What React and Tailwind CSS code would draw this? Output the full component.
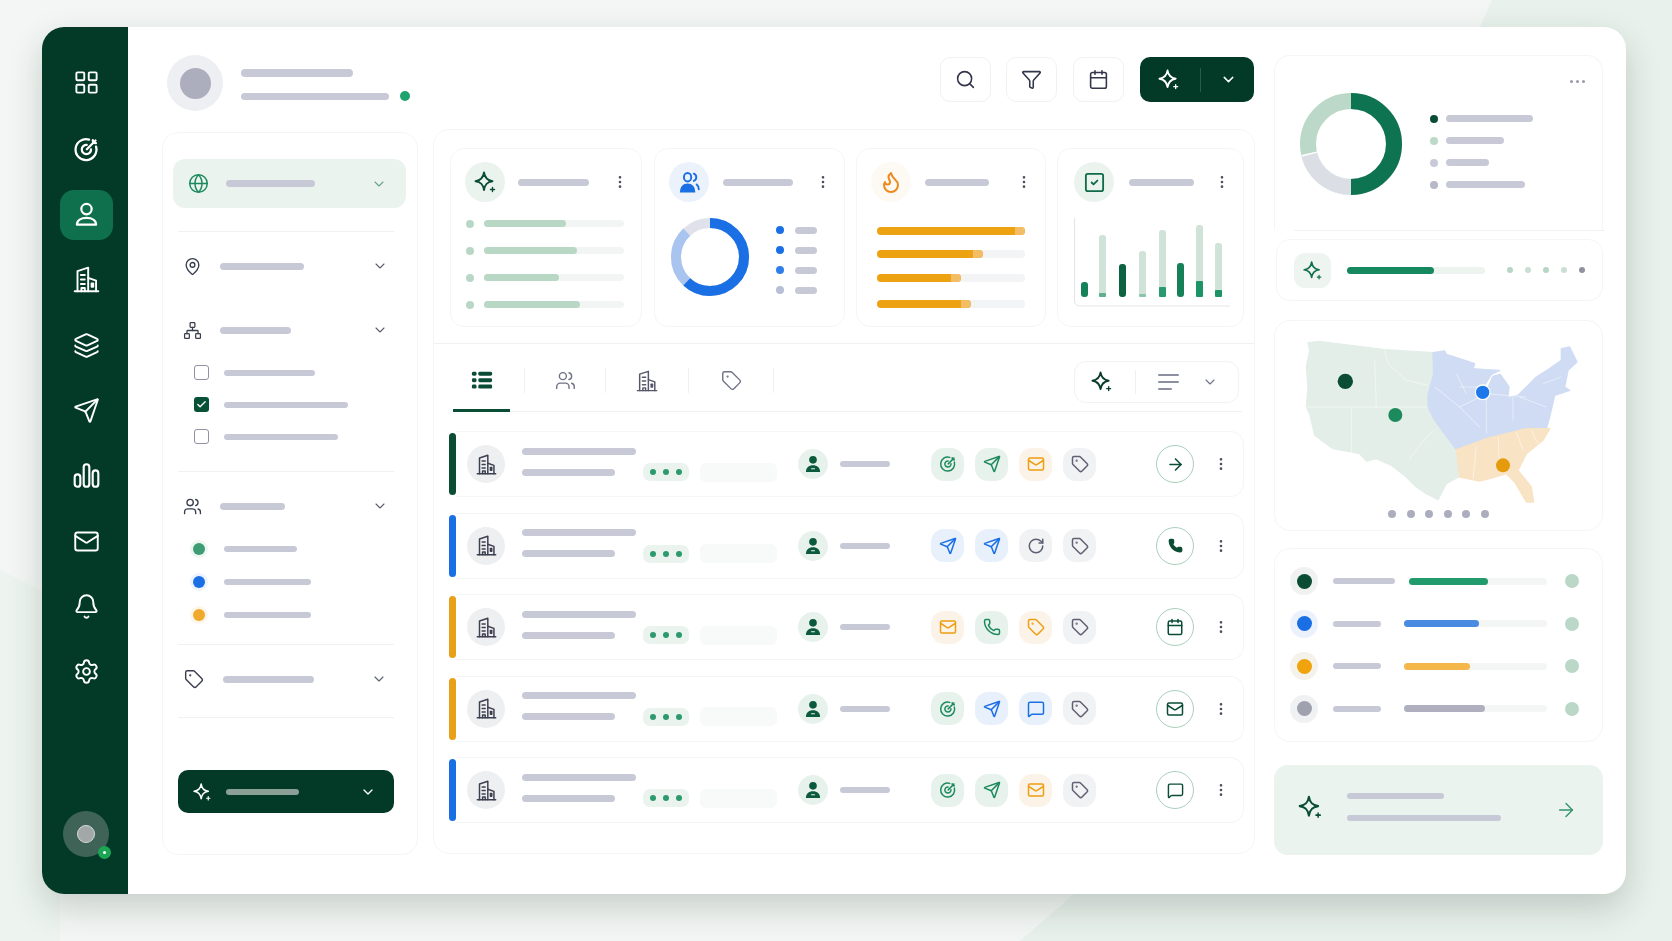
import React from 'react';
import {
  LayoutGrid, Layers, Send, Mail, Bell, Settings, Globe, MapPin, Network, Users, Tag,
  ChevronDown, Search, Funnel, Calendar, Flame, SquareCheck, Phone, ArrowRight, MessageSquare,
  EllipsisVertical, RotateCw, Check,
} from 'lucide-react';

const Bar = ({ className = '' }) => <div className={`rounded-full bg-[#c8c9d7] ${className}`} />;

const Sparkle = ({ className = '', strokeWidth = 1.9 }) => (
  <svg viewBox="0 0 24 24" fill="none" stroke="currentColor" strokeWidth={strokeWidth} strokeLinejoin="round" strokeLinecap="round" className={className}>
    <path d="M11 2.5C11.8 8 14 10.4 19.5 11.2 14 12 11.8 14.4 11 20 10.2 14.4 8 12 2.5 11.2 8 10.4 10.2 8 11 2.5Z" />
    <path d="M19.5 17.5v4M17.5 19.5h4" strokeWidth={1.4} />
  </svg>
);

const TargetIcon = ({ className = '' }) => (
  <svg viewBox="0 0 24 24" fill="none" stroke="currentColor" strokeWidth={2} strokeLinecap="round" className={className}>
    <path d="M20.5 9.5a9.3 9.3 0 1 1-6.2-6.3" />
    <path d="M16 11.8a4.1 4.1 0 1 1-3.8-3.9" />
    <path d="M12.3 11.8 20 4M17.6 3.6l.3 2.5 2.5.3" />
  </svg>
);

const UserIcon = ({ className = '' }) => (
  <svg viewBox="0 0 24 24" fill="none" stroke="currentColor" strokeWidth={2} strokeLinejoin="round" className={className}>
    <circle cx="12" cy="7.2" r="4.6" />
    <path d="M3.5 21c0-3.8 3.6-6 8.5-6s8.5 2.2 8.5 6z" />
  </svg>
);

const BuildingIcon = ({ className = '', strokeWidth = 1.8 }) => (
  <svg viewBox="0 0 24 24" fill="none" stroke="currentColor" strokeWidth={strokeWidth} strokeLinejoin="round" strokeLinecap="round" className={className}>
    <path d="M1.5 22.5h21" />
    <path d="M4 22.5V4.5L13.5 1.5V22.5" />
    <path d="M13.5 10.5 20.5 13V22.5" />
    <path d="M7 8h3.5M7 12h3.5M7 16h3.5" />
    <path d="M7.5 22.5V19.5h3v3" />
    <path d="M16.5 15.5h1.5V18.5h-1.5z" />
  </svg>
);

const ChartIcon = ({ className = '' }) => (
  <svg viewBox="0 0 24 24" fill="none" stroke="currentColor" strokeWidth={1.9} className={className}>
    <rect x="1.5" y="11" width="5" height="11" rx="2.5" />
    <rect x="9.5" y="2" width="5" height="20" rx="2.5" />
    <rect x="17.5" y="7.5" width="5" height="14.5" rx="2.5" />
  </svg>
);

const PeopleFill = ({ className = '' }) => (
  <svg viewBox="0 0 24 24" fill="none" stroke="currentColor" strokeWidth={2} strokeLinecap="round" className={className}>
    <ellipse cx="10" cy="6.5" rx="3.8" ry="4.4" />
    <path d="M3 21.5c0-4.5 2.8-7.5 7-7.5s7 3 7 7.5z" fill="currentColor" />
    <path d="M16.5 2.8c1.8.8 2.6 2.2 2.6 3.8s-.8 3-2.6 3.8M19.5 14c1.6 1.2 2.2 3 2.2 5" />
  </svg>
);

const PersonFill = () => (
  <svg viewBox="0 0 24 24" className="w-[20px] h-[20px] text-[#0c5a3c]" fill="currentColor">
    <circle cx="12" cy="7" r="4.6" />
    <path d="M3.5 21.5c0-5 3.5-8 8.5-8s8.5 3 8.5 8z" />
    <rect x="9.5" y="17" width="5" height="1.4" rx=".7" fill="#e8f2ec" />
  </svg>
);

const ListIcon = () => (
  <svg viewBox="0 0 24 24" className="w-[22px] h-[22px] text-[#0a4d34]" fill="currentColor">
    <rect x="1" y="3" width="5" height="4.4" rx="1.6" />
    <rect x="8" y="3" width="15" height="4.4" rx="1.6" />
    <rect x="1" y="10" width="5" height="4.4" rx="1.6" />
    <rect x="8" y="10" width="15" height="4.4" rx="1.6" />
    <rect x="1" y="17" width="5" height="4.4" rx="1.6" />
    <rect x="8" y="17" width="15" height="4.4" rx="1.6" />
  </svg>
);

const Dots = () => <EllipsisVertical className="w-[16px] h-[16px] text-[#4c4f60] shrink-0" strokeWidth={2} />;

const navIcons = [LayoutGrid, TargetIcon, UserIcon, BuildingIcon, Layers, Send, ChartIcon, Mail, Bell, Settings];

const Sidebar = () => (
  <aside className="w-[86px] shrink-0 bg-[#033a27] flex flex-col items-center pl-[2px] pt-[32px] pb-[37px]">
    <div className="flex flex-col gap-[15.3px]">
      {navIcons.map((Icon, i) => (
        <div key={i} className={`w-[53px] h-[50px] rounded-[14px] flex items-center justify-center text-white ${i === 2 ? 'bg-[#0e704c]' : ''} ${i === 0 ? '-translate-y-[2px]' : ''}`}>
          <Icon className="w-[27px] h-[27px]" strokeWidth={1.7} />
        </div>
      ))}
    </div>
    <div className="mt-auto relative w-[46px] h-[46px] rounded-full bg-[#3f6457] flex items-center justify-center">
      <div className="w-[18px] h-[18px] rounded-full bg-[#a2a7a8] border border-[#d6d9d9]" />
      <div className="absolute right-[-2px] bottom-[-2px] w-[13px] h-[13px] rounded-full bg-[#1ba653] flex items-center justify-center">
        <div className="w-[3px] h-[3px] rounded-full bg-white" />
      </div>
    </div>
  </aside>
);

const Filters = () => (
  <div className="w-[256px] h-[723px] mt-[3px] shrink-0 rounded-[16px] border border-[#f4f5f6] bg-white px-[10px] pt-[26px]">
    <div className="w-[233px] h-[49px] rounded-[12px] bg-[#ebf3ee] flex items-center pl-[15px]">
      <Globe className="w-[21px] h-[21px] text-[#1b8a5d]" strokeWidth={1.7} />
      <Bar className="w-[89px] h-[7px] ml-[17px]" />
      <ChevronDown className="w-[16px] h-[16px] text-[#67a487] ml-[56px]" strokeWidth={1.7} />
    </div>
    <div className="h-px w-[216px] ml-[5px] mt-[23px] bg-[#f0f1f3]" />
    <div className="flex items-center mt-[24px] ml-[10px] h-[20px]">
      <MapPin className="w-[19px] h-[19px] text-[#3a3d4e]" strokeWidth={1.7} />
      <Bar className="w-[84px] h-[7px] ml-[18px]" />
      <ChevronDown className="w-[16px] h-[16px] text-[#5d6072] ml-[68px]" strokeWidth={1.7} />
    </div>
    <div className="flex items-center mt-[44px] ml-[10px] h-[20px]">
      <Network className="w-[19px] h-[19px] text-[#3a3d4e]" strokeWidth={1.6} />
      <Bar className="w-[71px] h-[7px] ml-[18px]" />
      <ChevronDown className="w-[16px] h-[16px] text-[#5d6072] ml-[81px]" strokeWidth={1.7} />
    </div>
    <div className="flex flex-col gap-[17px] mt-[25px] ml-[21px]">
      <div className="flex items-center h-[15px]">
        <div className="w-[15px] h-[15px] rounded-[3px] border-[1.5px] border-[#8f92a3]" />
        <Bar className="w-[91px] h-[6px] ml-[15px]" />
      </div>
      <div className="flex items-center h-[15px]">
        <div className="w-[15px] h-[15px] rounded-[3px] bg-[#075237] flex items-center justify-center">
          <Check className="w-[11px] h-[11px] text-white" strokeWidth={3} />
        </div>
        <Bar className="w-[124px] h-[6px] ml-[15px]" />
      </div>
      <div className="flex items-center h-[15px]">
        <div className="w-[15px] h-[15px] rounded-[3px] border-[1.5px] border-[#8f92a3]" />
        <Bar className="w-[114px] h-[6px] ml-[15px]" />
      </div>
    </div>
    <div className="h-px w-[216px] ml-[5px] mt-[27px] bg-[#f0f1f3]" />
    <div className="flex items-center mt-[24px] ml-[10px] h-[20px]">
      <Users className="w-[19px] h-[19px] text-[#3a3d4e]" strokeWidth={1.7} />
      <Bar className="w-[65px] h-[7px] ml-[18px]" />
      <ChevronDown className="w-[16px] h-[16px] text-[#5d6072] ml-[87px]" strokeWidth={1.7} />
    </div>
    <div className="flex flex-col gap-[21px] mt-[27px] ml-[20px]">
      <div className="flex items-center h-[12px]">
        <div className="w-[12px] h-[12px] rounded-full bg-[#3d9c74] ring-[3px] ring-[#eef6f1]" />
        <Bar className="w-[73px] h-[6px] ml-[19px]" />
      </div>
      <div className="flex items-center h-[12px]">
        <div className="w-[12px] h-[12px] rounded-full bg-[#1a6fe4] ring-[3px] ring-[#edf3fc]" />
        <Bar className="w-[87px] h-[6px] ml-[19px]" />
      </div>
      <div className="flex items-center h-[12px]">
        <div className="w-[12px] h-[12px] rounded-full bg-[#f0aa2b] ring-[3px] ring-[#fcf6ea]" />
        <Bar className="w-[87px] h-[6px] ml-[19px]" />
      </div>
    </div>
    <div className="h-px w-[216px] ml-[5px] mt-[23px] bg-[#f0f1f3]" />
    <div className="flex items-center mt-[24px] ml-[11px] h-[20px]">
      <Tag className="w-[20px] h-[20px] text-[#3a3d4e]" strokeWidth={1.7} />
      <Bar className="w-[91px] h-[7px] ml-[19px]" />
      <ChevronDown className="w-[16px] h-[16px] text-[#5d6072] ml-[57px]" strokeWidth={1.7} />
    </div>
    <div className="h-px w-[216px] ml-[5px] mt-[28px] bg-[#f0f1f3]" />
    <div className="w-[216px] h-[43px] ml-[5px] mt-[52px] rounded-[10px] bg-[#033a27] flex items-center pl-[14px]">
      <Sparkle className="w-[20px] h-[20px] text-white" />
      <div className="w-[73px] h-[6px] ml-[14px] rounded-full bg-[#8ba096]" />
      <ChevronDown className="w-[16px] h-[16px] text-white ml-[61px]" strokeWidth={2} />
    </div>
  </div>
);

const CardHead = ({ bg, icon, barW, pl, barMl }) => (
  <div className={`flex items-center h-[40px] pr-[13px] ${pl}`}>
    <div className={`w-[40px] h-[40px] rounded-full flex items-center justify-center shrink-0 ${bg}`}>{icon}</div>
    <Bar className={`h-[7px] ${barW} ${barMl}`} />
    <div className="ml-auto"><Dots /></div>
  </div>
);

const listRows = ['w-[82px]', 'w-[93px]', 'w-[75px]', 'w-[96px]'];

const heatRows = [
  { w: 'w-[148px]', mt: '' },
  { w: 'w-[106px]', mt: 'mt-[15px]' },
  { w: 'w-[84px]', mt: 'mt-[16px]' },
  { w: 'w-[94px]', mt: 'mt-[18px]' },
];

const barsChart = [
  { x: 7, t: 64, fill: '#15805a', solid: true },
  { x: 25, t: 17, fill: '#5faf8e', s: 75 },
  { x: 45, t: 46, fill: '#0d6241', solid: true },
  { x: 65, t: 33, fill: '#8cc4aa', s: 76 },
  { x: 85, t: 12, fill: '#2a9a70', s: 69 },
  { x: 103, t: 45, fill: '#15805a', solid: true },
  { x: 122, t: 7, fill: '#1d9468', s: 63 },
  { x: 141, t: 25, fill: '#1d9468', s: 72 },
];

const KpiCards = () => (
  <div className="flex pl-[16px] pt-[18px] pb-[16px] border-b border-[#f0f1f3]">
    <div className="w-[192px] h-[179px] rounded-[14px] border border-[#f4f5f6] pt-[13px]">
      <CardHead pl="pl-[14px]" barMl="ml-[13px]" barW="w-[71px]" bg="bg-[#ebf3ee]" icon={<Sparkle className="w-[24px] h-[24px] text-[#0a4d34]" />} />
      <div className="flex flex-col gap-[20px] mt-[18px] pl-[15px]">
        {listRows.map((w) => (
          <div key={w} className="flex items-center h-[7px]">
            <div className="w-[8px] h-[8px] rounded-full bg-[#b9d7c6]" />
            <div className="w-[140px] h-[7px] ml-[10px] rounded-full bg-[#f3f5f4]">
              <div className={`h-[7px] rounded-full bg-[#b8d7c4] ${w}`} />
            </div>
          </div>
        ))}
      </div>
    </div>
    <div className="w-[191px] h-[179px] ml-[12px] rounded-[14px] border border-[#f4f5f6] pt-[13px]">
      <CardHead pl="pl-[14px]" barMl="ml-[14px]" barW="w-[70px]" bg="bg-[#ecf2fc]" icon={<PeopleFill className="w-[23px] h-[23px] text-[#1a6fe4]" />} />
      <div className="flex items-center mt-[16px] pl-[16px]">
        <svg viewBox="0 0 78 78" className="w-[78px] h-[78px] -rotate-90">
          <circle cx="39" cy="39" r="34" fill="none" stroke="#dfe2ea" strokeWidth="10" />
          <circle cx="39" cy="39" r="34" fill="none" stroke="#a9c5ef" strokeWidth="10" pathLength="100" strokeDasharray="88 100" />
          <circle cx="39" cy="39" r="34" fill="none" stroke="#1a6fe4" strokeWidth="10" pathLength="100" strokeDasharray="62 100" />
        </svg>
        <div className="flex flex-col gap-[12px] ml-[27px] mt-[6px]">
          {['bg-[#1a6fe4]', 'bg-[#1a6fe4]', 'bg-[#2f7fe8]', 'bg-[#b7bfd6]'].map((c, i) => (
            <div key={i} className="flex items-center h-[8px]">
              <div className={`w-[8px] h-[8px] rounded-full ${c}`} />
              <Bar className="w-[22px] h-[7px] ml-[11px]" />
            </div>
          ))}
        </div>
      </div>
    </div>
    <div className="w-[190px] h-[179px] ml-[11px] rounded-[14px] border border-[#f4f5f6] pt-[13px]">
      <CardHead pl="pl-[14px]" barMl="ml-[14px]" barW="w-[64px]" bg="bg-[#fdf9f3]" icon={<Flame className="w-[24px] h-[24px] text-[#ee8a1d]" strokeWidth={2} />} />
      <div className="mt-[25px] pl-[20px]">
        {heatRows.map((r) => (
          <div key={r.w} className={`w-[148px] h-[8px] rounded-full bg-[#f3f4f5] ${r.mt}`}>
            <div className={`h-[8px] rounded-full bg-[#eda211] flex justify-end ${r.w}`}>
              <div className="w-[10px] h-[8px] rounded-r-full bg-[#f3bd65]" />
            </div>
          </div>
        ))}
      </div>
    </div>
    <div className="w-[187px] h-[179px] ml-[11px] rounded-[14px] border border-[#f4f5f6] pt-[13px]">
      <CardHead pl="pl-[16px]" barMl="ml-[15px]" barW="w-[65px]" bg="bg-[#ebf3ee]" icon={<SquareCheck className="w-[23px] h-[23px] text-[#0f6b48]" strokeWidth={1.9} />} />
      <svg viewBox="0 0 156 89" className="w-[156px] h-[89px] mt-[16px] ml-[16px]">
        <path d="M.5 0V83a5 5 0 0 0 5 5H156" fill="none" stroke="#e3e5e8" strokeWidth="1" />
        {barsChart.map((b) => (
          <g key={b.x}>
            {!b.solid && <rect x={b.x} y={b.t} width="7" height={79 - b.t} rx="3" fill="#cfe3d8" />}
            {b.solid
              ? <rect x={b.x} y={b.t} width="7" height={79 - b.t} rx="3" fill={b.fill} />
              : <rect x={b.x} y={b.s} width="7" height={79 - b.s} rx="1" fill={b.fill} />}
          </g>
        ))}
      </svg>
    </div>
  </div>
);

const Tabs = () => (
  <div className="flex items-center h-[68px] ml-[19px] mr-[12px] border-b border-[#f0f1f3]">
    <div className="w-[57px] self-stretch pt-[6px] flex items-center justify-center border-b-[3px] border-[#0a4d34] mb-[-1px]">
      <ListIcon />
    </div>
    <div className="w-[15px] h-[25px] mt-[6px] border-r border-[#f0f1f3]" />
    <div className="w-[81px] h-[25px] mt-[6px] flex items-center justify-center border-r border-[#f0f1f3]">
      <Users className="w-[21px] h-[21px] text-[#6f7285]" strokeWidth={1.6} />
    </div>
    <div className="w-[83px] h-[25px] mt-[6px] flex items-center justify-center border-r border-[#f0f1f3]">
      <BuildingIcon className="w-[22px] h-[22px] text-[#55586a]" strokeWidth={1.6} />
    </div>
    <div className="w-[85px] h-[25px] mt-[6px] flex items-center justify-center border-r border-[#f0f1f3]">
      <Tag className="w-[21px] h-[21px] text-[#6f7285]" strokeWidth={1.6} />
    </div>
    <div className="ml-auto mr-[3px] mt-[8px] w-[165px] h-[42px] rounded-[12px] border border-[#f1f2f4] flex items-center pl-[15px]">
      <Sparkle className="w-[23px] h-[23px] text-[#0a3d2a]" />
      <div className="w-px h-[24px] bg-[#eeeff2] ml-[22px]" />
      <div className="ml-[22px] flex flex-col gap-[5px]">
        <div className="w-[21px] h-[2px] bg-[#8d90a1] rounded-full" />
        <div className="w-[21px] h-[2px] bg-[#8d90a1] rounded-full" />
        <div className="w-[14px] h-[2px] bg-[#8d90a1] rounded-full" />
      </div>
      <ChevronDown className="w-[16px] h-[16px] text-[#6f7285] ml-[23px]" strokeWidth={1.7} />
    </div>
  </div>
);

const tones = {
  green: 'bg-[#e8f2ec] text-[#1c8a5c]',
  blue: 'bg-[#e8f0fb] text-[#1a6fe4]',
  amber: 'bg-[#fbf3e8] text-[#ee9f12]',
  gray: 'bg-[#f1f2f4] text-[#5e6173]',
};

const rows = [
  { accent: 'bg-[#0a4d34]', actions: [[TargetIcon, 'green'], [Send, 'green'], [Mail, 'amber'], [Tag, 'gray']], Go: ArrowRight, goSize: 'w-[19px] h-[19px]' },
  { accent: 'bg-[#1a6fe4]', actions: [[Send, 'blue'], [Send, 'blue'], [RotateCw, 'gray'], [Tag, 'gray']], Go: Phone, goFill: true, goSize: 'w-[15px] h-[15px]' },
  { accent: 'bg-[#e8a018]', actions: [[Mail, 'amber'], [Phone, 'green'], [Tag, 'amber'], [Tag, 'gray']], Go: Calendar, goSize: 'w-[18px] h-[18px]' },
  { accent: 'bg-[#e8a018]', actions: [[TargetIcon, 'green'], [Send, 'blue'], [MessageSquare, 'blue'], [Tag, 'gray']], Go: Mail, goSize: 'w-[18px] h-[18px]' },
  { accent: 'bg-[#1a6fe4]', actions: [[TargetIcon, 'green'], [Send, 'green'], [Mail, 'amber'], [Tag, 'gray']], Go: MessageSquare, goSize: 'w-[17px] h-[17px]' },
];

const Row = ({ accent, actions, Go, goFill, goSize }) => (
  <div className="flex h-[66px]">
    <div className={`w-[7px] my-[2px] rounded-full shrink-0 ${accent}`} />
    <div className="flex-1 flex items-center rounded-r-[14px] border border-l-0 border-[#f4f5f6] pl-[11px]">
      <div className="w-[38px] h-[38px] rounded-full bg-[#eeeff1] flex items-center justify-center shrink-0">
        <BuildingIcon className="w-[21px] h-[21px] text-[#3d4050]" strokeWidth={1.7} />
      </div>
      <div className="ml-[17px] w-[114px] flex flex-col gap-[14px] shrink-0 mt-[-5px]">
        <Bar className="w-[114px] h-[7px]" />
        <Bar className="w-[93px] h-[7px]" />
      </div>
      <div className="ml-[7px] mt-[16px] w-[46px] h-[18px] rounded-[7px] bg-[#ebf3ee] flex items-center justify-center gap-[7px] shrink-0">
        <div className="w-[6px] h-[6px] rounded-full bg-[#2d9a6d]" />
        <div className="w-[6px] h-[6px] rounded-full bg-[#2d9a6d]" />
        <div className="w-[6px] h-[6px] rounded-full bg-[#2d9a6d]" />
      </div>
      <div className="ml-[11px] mt-[16px] w-[77px] h-[19px] rounded-[6px] bg-[#f8f9f9] shrink-0" />
      <div className="ml-[21px] w-[30px] h-[30px] rounded-full bg-[#e8f2ec] flex items-center justify-center shrink-0">
        <PersonFill />
      </div>
      <Bar className="w-[50px] h-[6px] ml-[12px] shrink-0" />
      <div className="ml-[41px] flex gap-[11px]">
        {actions.map(([Icon, tone], i) => (
          <div key={i} className={`w-[33px] h-[33px] rounded-[13px] flex items-center justify-center ${tones[tone]}`}>
            <Icon className="w-[18px] h-[18px]" strokeWidth={2} />
          </div>
        ))}
      </div>
      <div className="ml-[60px] w-[38px] h-[38px] rounded-full border border-[#a9d0bc] flex items-center justify-center shrink-0">
        <Go className={`text-[#0a4d34] ${goSize}`} strokeWidth={2} fill={goFill ? 'currentColor' : 'none'} />
      </div>
      <div className="ml-[19px]"><Dots /></div>
    </div>
  </div>
);

const Middle = () => (
  <div className="w-[822px] h-[725px] ml-[15px] rounded-[16px] border border-[#f4f5f6] bg-white">
    <KpiCards />
    <Tabs />
    <div className="flex flex-col gap-[15.5px] mt-[19px] ml-[15px] mr-[10px]">
      {rows.map((r, i) => <Row key={i} {...r} />)}
    </div>
  </div>
);

const Header = () => (
  <div className="flex items-start h-[73px] pt-[29px] box-content">
    <div className="w-[56px] h-[56px] rounded-full bg-[#eeeff3] flex items-center justify-center shrink-0 ml-[5px] mt-[-1px]">
      <div className="w-[31px] h-[31px] rounded-full bg-[#acaebe]" />
    </div>
    <div className="ml-[18px] mt-[13px]">
      <Bar className="w-[112px] h-[8px]" />
      <div className="flex items-center mt-[14px]">
        <Bar className="w-[148px] h-[7px]" />
        <div className="w-[10px] h-[10px] rounded-full bg-[#1fa36e] ml-[11px]" />
      </div>
    </div>
    <div className="ml-auto mr-[1px] flex items-center mt-[1px]">
      <div className="w-[51px] h-[45px] rounded-[10px] border border-[#f0f1f3] flex items-center justify-center">
        <Search className="w-[21px] h-[21px] text-[#33364a]" strokeWidth={1.8} />
      </div>
      <div className="w-[51px] h-[45px] ml-[15px] rounded-[10px] border border-[#f0f1f3] flex items-center justify-center">
        <Funnel className="w-[21px] h-[21px] text-[#33364a]" strokeWidth={1.8} />
      </div>
      <div className="w-[51px] h-[45px] ml-[16px] rounded-[10px] border border-[#f0f1f3] flex items-center justify-center">
        <Calendar className="w-[21px] h-[21px] text-[#33364a]" strokeWidth={1.8} />
      </div>
      <div className="w-[114px] h-[45px] ml-[16px] rounded-[10px] bg-[#033a27] flex items-center pl-[17px]">
        <Sparkle className="w-[23px] h-[23px] text-white" />
        <div className="w-px h-[24px] bg-[#2a5a48] ml-[20px]" />
        <ChevronDown className="w-[17px] h-[17px] text-white ml-[19px]" strokeWidth={2} />
      </div>
    </div>
  </div>
);

const mapPaths = {
  west: 'M145 908 178 903 375 928 520 937 522 1000 505 1065 505 1100 525 1140 590 1228 597 1310 560 1330 535 1378 500 1360 470 1340 440 1310 395 1275 350 1255 320 1262 300 1240 220 1225 165 1185 150 1120 140 1100 145 1040 140 980 150 930Z',
  mid: 'M520 937 555 932 560 942 600 955 645 970 640 985 680 988 720 990 695 1002 672 1040 668 1052 682 1048 700 1008 722 1002 748 1040 745 1072 775 1065 830 1010 870 985 905 960 905 925 930 920 952 965 925 990 915 1040 930 1050 885 1065 870 1130 860 1165 800 1165 680 1195 590 1228 525 1140 505 1100 505 1065 522 1000Z',
  south: 'M590 1228 680 1195 800 1165 870 1165 850 1200 800 1240 775 1290 815 1340 822 1385 800 1385 765 1325 740 1300 690 1315 660 1322 600 1310Z',
  lines: 'M375 928 385 970 440 1020 505 1035M345 960 350 1100M140 1100 505 1100M275 1100 275 1240M450 1255 505 1185 525 1170M525 1040 600 1100 680 1060 800 1070M600 1100 660 1160M680 1060 680 1180M760 1070 760 1140M780 1070 860 1100M600 1040 660 1040M590 1000 620 1060M850 1030 905 1010M650 1215 640 1315M715 1190 720 1280M770 1175 790 1230M815 1170 835 1210',
};

const LegendRow = ({ outer, inner, barW, trackMl, trackW, fill }) => (
  <div className="flex items-center h-[28px]">
    <div className={`w-[28px] h-[28px] rounded-full flex items-center justify-center shrink-0 ${outer}`}>
      <div className={`w-[15px] h-[15px] rounded-full ${inner}`} />
    </div>
    <Bar className={`h-[6px] ml-[15px] ${barW}`} />
    <div className={`h-[7px] rounded-full bg-[#f4f5f5] ${trackMl} ${trackW}`}>
      <div className={`h-[7px] rounded-full ${fill}`} />
    </div>
    <div className="w-[14px] h-[14px] rounded-full bg-[#bad7c8] ml-[18px] shrink-0" />
  </div>
);

const Right = () => (
  <div className="w-[329px] shrink-0 ml-[19px] pt-[28px]">
    <div className="relative h-[175px] rounded-t-[16px] border border-[#f4f5f6] border-b-0 pl-[25px] pt-[37px] flex">
      <svg viewBox="0 0 102 102" className="w-[102px] h-[102px] -rotate-90">
        <circle cx="51" cy="51" r="43" fill="none" stroke="#bcd8c8" strokeWidth="16" />
        <circle cx="51" cy="51" r="43" fill="none" stroke="#ffffff" strokeWidth="16" pathLength="100" strokeDasharray="71.5 100" />
        <circle cx="51" cy="51" r="43" fill="none" stroke="#dcdee6" strokeWidth="16" pathLength="100" strokeDasharray="71 100" />
        <circle cx="51" cy="51" r="43" fill="none" stroke="#0e7350" strokeWidth="16" pathLength="100" strokeDasharray="50 100" />
      </svg>
      <div className="flex flex-col gap-[15px] ml-[28px] mt-[22px]">
        <div className="flex items-center h-[7px]">
          <div className="w-[8px] h-[8px] rounded-full bg-[#0a4d34]" />
          <Bar className="w-[87px] h-[7px] ml-[8px]" />
        </div>
        <div className="flex items-center h-[7px]">
          <div className="w-[8px] h-[8px] rounded-full bg-[#bcd8c8]" />
          <Bar className="w-[58px] h-[7px] ml-[8px]" />
        </div>
        <div className="flex items-center h-[7px]">
          <div className="w-[8px] h-[8px] rounded-full bg-[#c8c9d7]" />
          <Bar className="w-[43px] h-[7px] ml-[8px]" />
        </div>
        <div className="flex items-center h-[7px]">
          <div className="w-[8px] h-[8px] rounded-full bg-[#b8b9c8]" />
          <Bar className="w-[79px] h-[7px] ml-[8px]" />
        </div>
      </div>
      <div className="absolute right-[17px] top-[24px] flex gap-[3px]">
        <div className="w-[3px] h-[3px] rounded-full bg-[#9a9cab]" />
        <div className="w-[3px] h-[3px] rounded-full bg-[#9a9cab]" />
        <div className="w-[3px] h-[3px] rounded-full bg-[#9a9cab]" />
      </div>
    </div>
    <div className="h-px w-[311px] ml-[20px] bg-[#f0f1f3]" />
    <div className="h-[62px] ml-[2px] mt-[8px] rounded-[14px] border border-[#f4f5f6] flex items-center pl-[17px]">
      <div className="w-[37px] h-[35px] rounded-[11px] bg-[#eef4f0] flex items-center justify-center">
        <Sparkle className="w-[21px] h-[21px] text-[#11704c]" />
      </div>
      <div className="w-[138px] h-[7px] ml-[16px] rounded-full bg-[#edf3ef]">
        <div className="w-[87px] h-[7px] rounded-full bg-[#15885f]" />
      </div>
      <div className="flex items-center gap-[12px] ml-[22px]">
        <div className="w-[6px] h-[6px] rounded-full bg-[#b7d5c5]" />
        <div className="w-[6px] h-[6px] rounded-full bg-[#c9dfd3]" />
        <div className="w-[6px] h-[6px] rounded-full bg-[#b7d5c5]" />
        <div className="w-[6px] h-[6px] rounded-full bg-[#c9dfd3]" />
        <div className="w-[6px] h-[6px] rounded-full bg-[#8f919f]" />
      </div>
    </div>
    <div className="h-[211px] mt-[19px] rounded-[16px] border border-[#f4f5f6] pl-[28px] pt-[16px]">
      <svg viewBox="130 890 840 510" className="w-[280px] h-[170px]">
        <path d={mapPaths.west} fill="#e3eee8" stroke="#e3eee8" strokeWidth="4" strokeLinejoin="round" />
        <path d={mapPaths.mid} fill="#cfdcf4" stroke="#cfdcf4" strokeWidth="4" strokeLinejoin="round" />
        <path d={mapPaths.south} fill="#f8e3c5" stroke="#f8e3c5" strokeWidth="4" strokeLinejoin="round" />
        <path d={mapPaths.lines} fill="none" stroke="#ffffff" strokeWidth="2" strokeOpacity=".75" />
        <circle cx="257" cy="1023" r="23" fill="#0a4d34" />
        <circle cx="407" cy="1124" r="21" fill="#1c8a5c" />
        <circle cx="669" cy="1056" r="22" fill="#1f78ea" stroke="#ffffff" strokeWidth="4" />
        <circle cx="730" cy="1275" r="21" fill="#e69b0c" />
      </svg>
      <div className="flex gap-[10.5px] ml-[85px] mt-[3px]">
        {[0, 1, 2, 3, 4, 5].map((n) => <div key={n} className="w-[8px] h-[8px] rounded-full bg-[#acaebe]" />)}
      </div>
    </div>
    <div className="h-[194px] mt-[17px] rounded-[16px] border border-[#f4f5f6] pl-[15px] pt-[18px] flex flex-col gap-[14.5px]">
      <LegendRow outer="bg-[#f0f1f1]" inner="bg-[#0a4d34]" barW="w-[62px]" trackMl="ml-[14px]" trackW="w-[138px]" fill="w-[79px] bg-[#219a6c]" />
      <LegendRow outer="bg-[#ecf2fc]" inner="bg-[#1a6fe4]" barW="w-[48px]" trackMl="ml-[23px]" trackW="w-[143px]" fill="w-[75px] bg-[#4a8ae0]" />
      <LegendRow outer="bg-[#f5f2ec]" inner="bg-[#f0a30c]" barW="w-[48px]" trackMl="ml-[23px]" trackW="w-[143px]" fill="w-[66px] bg-[#f3b74a]" />
      <LegendRow outer="bg-[#f0f1f3]" inner="bg-[#9fa1ae]" barW="w-[48px]" trackMl="ml-[23px]" trackW="w-[143px]" fill="w-[81px] bg-[#aeb0bf]" />
    </div>
    <div className="h-[90px] mt-[23px] rounded-[14px] bg-[#ebf3ee] flex items-center pl-[23px]">
      <Sparkle className="w-[26px] h-[26px] text-[#0a4d34] mt-[-6px]" />
      <div className="ml-[24px] flex flex-col gap-[16px] mt-[-6px]">
        <Bar className="w-[97px] h-[6px]" />
        <Bar className="w-[154px] h-[6px]" />
      </div>
      <ArrowRight className="w-[22px] h-[22px] text-[#33946c] ml-[54px]" strokeWidth={1.5} />
    </div>
  </div>
);

export default function App() {
  return (
    <div className="relative w-[1672px] h-[941px] overflow-hidden bg-[#f3f6f4] pl-[42px] pt-[27px]">
      {/* background wedges */}
      <div className="absolute inset-0 bg-[#e8f1eb] [clip-path:polygon(1492px_0,1672px_0,1672px_941px,1020px_941px,1074px_894px,1480px_27px)]" />
      <div className="absolute inset-0 bg-[#edf4ef] [clip-path:polygon(0_570px,60px_600px,60px_941px,0_941px)]" />
      <div className="relative w-[1584px] h-[867px] rounded-[22px] overflow-hidden bg-white flex shadow-[0_14px_34px_rgba(30,50,40,0.2)]">
        <Sidebar />
        <div className="flex-1 flex pl-[34px]">
          <div className="w-[1093px] shrink-0">
            <Header />
            <div className="flex">
              <Filters />
              <Middle />
            </div>
          </div>
          <Right />
        </div>
      </div>
    </div>
  );
}
